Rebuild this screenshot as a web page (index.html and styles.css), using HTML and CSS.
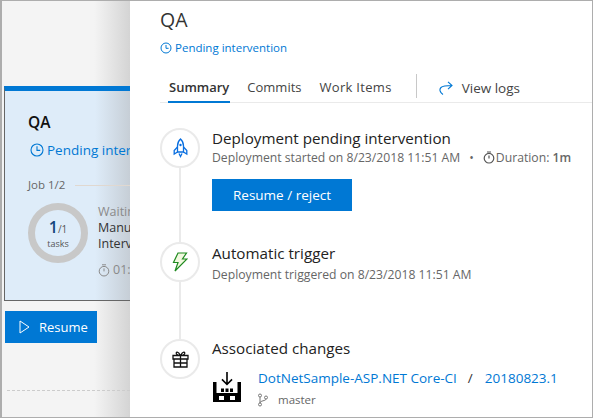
FILE: index.html
```html
<!DOCTYPE html>
<html lang="en">
<head>
  <meta charset="UTF-8"/>
  <title>QA stage</title>
  <link rel="stylesheet" href="styles.css">
</head>
<body>
  <div class="frame">
    <aside class="stage-col">
      <div class="stage-card">
        <h2>QA</h2>
        <div class="stage-status">
          <svg width="14" height="14" viewBox="0 0 14 14" fill="none" stroke="#0078d4" stroke-width="1.1"><circle cx="7" cy="7" r="6"/><path d="M7 3.200v4.200h3.200"/></svg>
          <span>Pending intervention</span>
        </div>
        <div class="job-head"><span>Job 1/2</span><i></i></div>
        <div class="job-row">
          <div class="ring"><div class="ring-count"><b>1</b><small>/1</small></div><div class="ring-label">tasks</div></div>
          <div class="job-text">
            <div class="muted job-state">Waiting</div>
            <div>Manual</div>
            <div>Intervention</div>
            <div class="muted job-time">
              <svg width="12" height="13" viewBox="0 0 12 13" fill="none" stroke="#8a8a8a" stroke-width="1"><circle cx="6" cy="7.200" r="4.800"/><path d="M4 .8h4M6 4.400v3"/></svg>
              <span>01:00</span>
            </div>
          </div>
        </div>
      </div>
      <button class="resume-btn">
        <svg width="11" height="14" viewBox="0 0 11 14" fill="none" stroke="#fff" stroke-width="1"><path d="M1 1l9 6-9 6z"/></svg>
        <span>Resume</span>
      </button>
      <div class="dash"></div>
    </aside>

    <main class="panel">
      <h1>QA</h1>
      <div class="panel-status">
        <svg width="12" height="12" viewBox="0 0 12 12" fill="none" stroke="#0078d4" stroke-width="1"><circle cx="6" cy="6" r="5"/><path d="M6 3v3.300h2.600"/></svg>
        <span>Pending intervention</span>
      </div>
      <nav class="tabs">
        <a class="tab active">Summary</a>
        <a class="tab">Commits</a>
        <a class="tab work">Work Items</a>
        <span class="tab-sep"></span>
        <a class="tab logs">
          <svg width="14" height="14" viewBox="0 0 14 14" fill="none" stroke="#0078d4" stroke-width="1.100"><path d="M4 13.500C1 11.500 0 8.500 2 6.500 4 4.500 7 4.500 13 4.500M9 .8l4 3.700-4 3.700"/></svg>
          <span>View logs</span>
        </a>
      </nav>

      <div class="timeline">
        <section class="step step-one">
          <div class="step-icon">
            <svg width="15" height="20" viewBox="0 0 15 20" fill="none" stroke="#0a6fe0" stroke-width="1.300"><path d="M7.500 1C5.300 3 4.500 5.500 4.500 8v6h6V8c0-2.500-.8-5-3-7z"/><circle cx="7.500" cy="7" r="1.200" fill="#0a6fe0" stroke="none"/><path d="M4.500 9L1.200 12.500V16l3.300-2M10.500 9l3.300 3.500V16l-3.300-2M6 15.500l1.500 3 1.500-3"/></svg>
          </div>
          <div class="step-body">
            <h3>Deployment pending intervention</h3>
            <p>Deployment started on 8/23/2018 11:51 AM<span class="dot">•</span><svg class="timer" width="12" height="13" viewBox="0 0 12 13" fill="none" stroke="#555" stroke-width="1.200"><circle cx="6" cy="7.200" r="4.800"/><path d="M4 1h4M6 4.400v3"/></svg><span>Duration: <em>1m</em></span></p>
            <button class="primary-btn">Resume / reject</button>
          </div>
        </section>

        <section class="step step-two">
          <div class="step-icon">
            <svg width="16" height="20" viewBox="0 0 16 20" fill="#f2f8e0" stroke="#1f8a1f" stroke-width="1.200"><path d="M6 1h8.500L10.500 7H15L3 19l3-8.500H1.500z"/></svg>
          </div>
          <div class="step-body">
            <h3>Automatic trigger</h3>
            <p>Deployment triggered on 8/23/2018 11:51 AM</p>
          </div>
        </section>

        <section class="step step-three">
          <div class="step-icon">
            <svg width="17" height="18" viewBox="0 0 17 18" fill="none" stroke="#111" stroke-width="1.300"><path d="M1 5.500h15V9H1zM2 9h13v8H2zM8.500 5.500V17M2 13h13M8.500 5.500C6 1 3.500 1.500 4.500 4 5 5 7 5.500 8.500 5.500zM8.500 5.500C11 1 13.500 1.500 12.500 4 12 5 10 5.500 8.500 5.500z"/></svg>
          </div>
          <div class="step-body">
            <h3>Associated changes</h3>
            <div class="artifact">
              <svg class="artifact-icon" width="28" height="30" viewBox="0 0 28 30" fill="#000"><path d="M13.200 0h1.600v10.500l3.700-3.700 1.100 1.100-5.600 5.600-5.600-5.600 1.100-1.100 3.700 3.700z"/><path fill-rule="evenodd" d="M0 10h3.500v11h21V10H28v20H0zM6 24v4h5v-4zm11 0v4h5v-4z"/><path d="M8 16.500h3V20H8zM12.500 16.500h3V20h-3zM17 16.500h3V20h-3z"/></svg>
              <div class="artifact-text">
                <div class="artifact-links"><a>DotNetSample-ASP.NET Core-CI</a><span class="slash">/</span><a>20180823.1</a></div>
                <div class="branch">
                  <svg width="10" height="14" viewBox="0 0 10 14" fill="none" stroke="#777" stroke-width="1"><circle cx="2" cy="2.500" r="1.500"/><circle cx="2" cy="11.500" r="1.500"/><circle cx="8" cy="4.500" r="1.500"/><path d="M2 4v6M8 6c0 2-6 1.500-6 4"/></svg>
                  <span>master</span>
                </div>
              </div>
            </div>
          </div>
        </section>
      </div>
    </main>
  </div>
</body>
</html>
```

FILE: styles.css
```css
* { box-sizing:border-box; }
html, body { margin:0; height:100%; }
body { font-family:"Open Sans", "Noto Sans", sans-serif; color:#333; background:#fff; overflow:hidden; }
h1, h2, h3, p { margin:0; font-weight:400; }
button { font-family:inherit; border:0; color:#fff; background:#0078d4; padding:0; }
svg { flex-shrink:0; }

.frame { display:flex; width:593px; height:418px; border:1px solid #adadad; border-left-width:2px; overflow:hidden; }

/* left column behind the panel */
.stage-col { width:128px; flex-shrink:0; background:linear-gradient(90deg,#f4f4f4 72%,#d4d4d4 100%); padding-top:85px; padding-left:2px; }
.stage-card { height:215px; width:126px; background:linear-gradient(90deg,#deecf9 72%,#c6ced6 100%); border:1px solid #666; border-top:5px solid #0078d4; border-right:0; padding:21px 0 0 23px; overflow:hidden; white-space:nowrap; }
.stage-card h2 { font-size:15.500px; font-weight:600; color:#111; line-height:20px; }
.stage-status { display:flex; align-items:center; gap:3px; margin:8px 0 0 2px; font-size:13.500px; color:#0078d4; line-height:20px; }
.job-head { display:flex; align-items:center; gap:10px; margin-top:17px; font-size:11.500px; color:#666; line-height:16px; }
.job-head i { width:60px; height:1px; background:#e0d8d0; }
.job-row { display:flex; gap:10px; margin-top:10px; }
.ring { width:60px; height:60px; flex-shrink:0; border:7px solid #c8c8c8; border-radius:50%; text-align:center; padding-top:9px; color:#333; }
.ring-count { line-height:17px; }
.ring b { font-size:16px; font-weight:600; color:#14457a; }
.ring small { font-size:10px; color:#555; }
.ring-label { font-size:9px; color:#555; line-height:11px; }
.job-text { font-size:12.500px; line-height:16px; color:#333; padding-top:1px; }
.muted { color:#8a8a8a; }
.job-time { display:flex; align-items:center; gap:3px; margin-top:10px; }

.resume-btn { display:flex; align-items:center; gap:9px; width:92px; height:32px; margin:10px 0 0 1px; padding-left:14px; font-size:13px; }
.dash { margin-top:47px; margin-left:3px; border-top:1px dashed #ccc; }

/* details panel */
.panel { flex:1; background:#fff; padding:7px 0 0 30px; min-width:0; }
.panel h1 { font-size:19.500px; line-height:24px; color:#333; }
.panel-status { display:flex; align-items:center; gap:3px; margin-top:8px; font-size:11.500px; line-height:16px; color:#0078d4; }

.tabs { display:flex; align-items:flex-start; height:30px; margin-top:17px; border-bottom:1px solid #eaeaea; font-size:13px; }
.tab { color:#444; line-height:28px; height:30px; padding:0 1px; margin:0 8px; }
.tab.active { font-weight:600; color:#333; border-bottom:2px solid #0078d4; }
.tab.work { letter-spacing:.3px; }
.tab-sep { width:1px; height:24px; margin:1px 13px 0 15px; background:#c8c8c8; }
.logs { display:flex; align-items:center; gap:9px; font-size:13.500px; }

.step { display:flex; gap:12px; }
.step-one { padding-top:25px; height:125px; }
.step-two { height:86px; padding-top:14px; }
.step-three { padding-top:25px; }
.step-icon { position:relative; width:40px; height:40px; flex-shrink:0; border:2px solid #eaeaea; border-radius:50%; display:flex; align-items:center; justify-content:center; background:#fff; }
.step-one .step-icon::after, .step-two .step-icon::after { content:""; position:absolute; left:17px; top:38px; width:2px; background:#eaeaea; }
.step-one .step-icon::after { height:74px; }
.step-two .step-icon::after { height:57px; }
.step-body h3 { font-size:15.200px; line-height:20px; color:#222; }
.step-body p { font-size:12.200px; line-height:20px; color:#666; white-space:nowrap; }
.step-two .step-body { padding-top:1px; }
.step-two p { margin-top:2px; }
.step-three .step-body { margin-top:-1px; }
.dot { margin:0 9px; }
.timer { vertical-align:-2px; margin-right:1px; }
.step-body em { font-style:normal; font-weight:600; }
.primary-btn { display:block; width:140px; height:32px; margin-top:11px; font-size:13.500px; }

.artifact { display:flex; gap:17px; margin-top:14px; }
.artifact-icon { margin-left:1px; }
.artifact-text { margin-top:-3px; }
.artifact-links { font-size:13.500px; line-height:18px; white-space:nowrap; color:#333; }
.artifact-links a { color:#0078d4; }
.slash { margin:0 12px 0 11px; }
.branch { display:flex; align-items:center; gap:10px; margin-top:5px; font-size:11.500px; color:#666; }
```
